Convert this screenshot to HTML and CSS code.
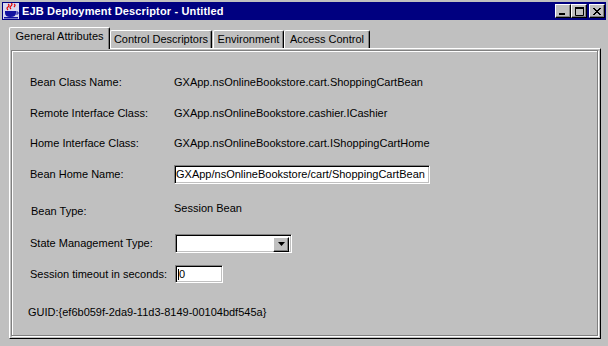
FILE: index.html
```html
<!DOCTYPE html>
<html lang="en">
<head>
    <meta charset="UTF-8">
    <title>EJB Deployment Descriptor - Untitled</title>
    <link rel="stylesheet" href="styles.css">
</head>
<body>
<div class="window">
    <div class="titlebar">
        <svg class="app-icon" width="16" height="16" viewBox="0 0 16 16">
            <rect x="0" y="0" width="16" height="16" fill="#d8d8f0"/>
            <path d="M5 1 q2 1 0 3 q-2 1 0 3 M8 0 q2 1 0 3 q-2 1 0 3 M11 1 q2 1 0 3" stroke="#e00000" stroke-width="1.2" fill="none"/>
            <path d="M2 8 h11 v2 q0 4 -5.5 4 q-5.5 0 -5.5 -4 z" fill="#1010a0"/>
            <path d="M13 9 h2 v2 h-2" stroke="#1010a0" fill="none"/>
            <rect x="1" y="14" width="14" height="1.5" fill="#1010a0"/>
        </svg>
        <span class="title">EJB Deployment Descriptor - Untitled</span>
        <div class="win-buttons">
            <span class="win-btn"><svg width="8" height="8" viewBox="0 0 8 8"><rect x="0" y="6" width="6" height="2" fill="#000"/></svg></span>
            <span class="win-btn"><svg width="9" height="9" viewBox="0 0 9 9"><path d="M0.5 0.5 h8 v8 h-8 z" stroke="#000" fill="none"/><rect x="0" y="0" width="9" height="2" fill="#000"/></svg></span>
            <span class="win-btn close"><svg width="8" height="7" viewBox="0 0 8 7"><path d="M0 0 L7 7 M1 0 L8 7 M7 0 L0 7 M8 0 L1 7" stroke="#000" stroke-width="1"/></svg></span>
        </div>
    </div>

    <div class="tabs">
        <div class="tab active">General Attributes</div>
        <div class="tab tab-control">Control Descriptors</div>
        <div class="tab tab-env">Environment</div>
        <div class="tab tab-access">Access Control</div>
    </div>

    <div class="panel">
        <div class="panel-inner">
            <div class="row">
                <span class="label">Bean Class Name:</span>
                <span class="value">GXApp.nsOnlineBookstore.cart.ShoppingCartBean</span>
            </div>
            <div class="row gap-11">
                <span class="label">Remote Interface Class:</span>
                <span class="value">GXApp.nsOnlineBookstore.cashier.ICashier</span>
            </div>
            <div class="row gap-10">
                <span class="label">Home Interface Class:</span>
                <span class="value">GXApp.nsOnlineBookstore.cart.IShoppingCartHome</span>
            </div>
            <div class="row gap-11">
                <span class="label">Bean Home Name:</span>
                <input class="field home-name" type="text" value="GXApp/nsOnlineBookstore/cart/ShoppingCartBean">
            </div>
            <div class="row row-type gap-16">
                <span class="label label-low">Bean Type:</span>
                <span class="value value-high">Session Bean</span>
            </div>
            <div class="row gap-13">
                <span class="label">State Management Type:</span>
                <div class="combo">
                    <span class="combo-text"></span>
                    <span class="combo-btn">
                        <svg width="7" height="4" viewBox="0 0 7 4"><path d="M0 0 h7 l-3.5 4 z" fill="#000"/></svg>
                    </span>
                </div>
            </div>
            <div class="row gap-11">
                <span class="label">Session timeout in seconds:</span>
                <div class="field timeout"><span class="caret"></span>0</div>
            </div>
            <div class="row guid gap-18">
                GUID:{ef6b059f-2da9-11d3-8149-00104bdf545a}
            </div>
        </div>
    </div>
</div>
</body>
</html>
```

FILE: styles.css
```css
* {
    box-sizing: border-box;
}

body {
    margin: 0;
    background-color: #c0c0c0;
}

.window {
    width: 608px;
    height: 346px;
    background-color: #c0c0c0;
    font-family: "Liberation Sans", Arial, sans-serif;
    font-size: 11px;
    color: #000;
    padding-top: 2px;
    overflow: hidden;
}

/* title bar */

.titlebar {
    margin: 0 2px;
    height: 18px;
    background-color: #000080;
    display: flex;
    align-items: center;
    padding: 0 1px 0 1px;
}

.app-icon {
    flex: none;
}

.title {
    margin-left: 3px;
    color: #fff;
    font-weight: bold;
    font-size: 11px;
    letter-spacing: 0.15px;
}

.win-buttons {
    margin-left: auto;
    display: flex;
}

.win-btn {
    width: 16px;
    height: 14px;
    background-color: #c0c0c0;
    border-style: solid;
    border-width: 1px;
    border-color: #fff #000 #000 #fff;
    box-shadow: inset -1px -1px #808080;
    display: flex;
    align-items: center;
    justify-content: center;
}

.win-btn.close {
    margin-left: 2px;
}

/* tabs */

.tabs {
    display: flex;
    align-items: flex-end;
    height: 21px;
    margin: 7px 0 0 9px;
    position: relative;
    z-index: 1;
}

.tab {
    height: 18px;
    line-height: 16px;
    text-align: center;
    background-color: #c0c0c0;
    border-style: solid;
    border-width: 1px 1px 0 1px;
    border-color: #fff #000 #fff #fff;
    border-radius: 2px 2px 0 0;
    box-shadow: inset -1px 0 #808080;
    white-space: nowrap;
}

.tab.active {
    width: 101px;
    height: 22px;
    line-height: 17px;
    margin-bottom: -1px;
}

.tab-control {
    width: 102px;
}

.tab-env {
    width: 71px;
    margin-left: 1px;
}

.tab-access {
    width: 86px;
}

/* panel */

.panel {
    margin-left: 9px;
    width: 592px;
    height: 291px;
    border-style: solid;
    border-width: 1px;
    border-color: #fff #000 #000 #fff;
    padding: 1px 2px 2px 1px;
}

.panel-inner {
    height: 100%;
    border-style: solid;
    border-width: 1px;
    border-color: #808080;
    box-shadow: 1px 1px 0 #fff, inset 1px 1px 0 #fff;
    padding: 21px 0 0 18px;
}

.row {
    display: flex;
    align-items: center;
    height: 20px;
}

.gap-10 { margin-top: 10px; }
.gap-11 { margin-top: 11px; }
.gap-13 { margin-top: 13px; }
.gap-16 { margin-top: 16px; }
.gap-18 { margin-top: 18px; }

.label {
    width: 144px;
    flex: none;
}

.row-type {
    align-items: flex-start;
}

.label-low {
    margin-top: 5px;
    padding-left: 1px;
}

.value-high {
    margin-top: 2px;
}

.field {
    height: 19px;
    background-color: #fff;
    border-style: solid;
    border-width: 1px;
    border-color: #808080 #fff #fff #808080;
    box-shadow: inset 1px 1px #000, inset -1px -1px #c0c0c0;
    font-family: "Liberation Sans", Arial, sans-serif;
    font-size: 11px;
    color: #000;
    padding: 0 2px 0 1px;
    outline: none;
    margin: 0;
}

.home-name {
    width: 256px;
}

.timeout {
    width: 48px;
    height: 18px;
    margin-left: 1px;
    display: flex;
    align-items: center;
    padding-left: 2px;
}

.caret {
    width: 1px;
    height: 11px;
    background-color: #000;
}

.combo {
    margin-left: 1px;
    width: 117px;
    height: 19px;
    background-color: #fff;
    border-style: solid;
    border-width: 1px;
    border-color: #808080 #fff #fff #808080;
    box-shadow: inset 1px 1px #000, inset -1px -1px #c0c0c0;
    display: flex;
    justify-content: flex-end;
    padding: 2px;
}

.combo-btn {
    width: 16px;
    height: 15px;
    background-color: #c0c0c0;
    border-style: solid;
    border-width: 1px;
    border-color: #fff #000 #000 #fff;
    box-shadow: inset -1px -1px #808080;
    display: flex;
    align-items: center;
    justify-content: center;
}

.guid {
    margin-left: -2px;
}
```
